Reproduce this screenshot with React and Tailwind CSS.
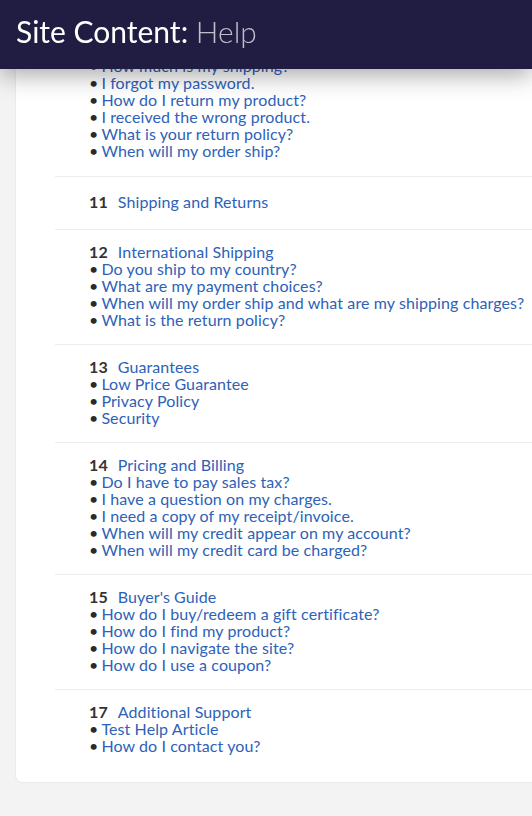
import React from "react";

// the page is scrolled: the top of the list sits under the fixed header
const sections = [
  {
    num: null,
    title: null,
    items: [
      "How much is my shipping?",
      "I forgot my password.",
      "How do I return my product?",
      "I received the wrong product.",
      "What is your return policy?",
      "When will my order ship?",
    ],
  },
  { num: 11, title: "Shipping and Returns", items: [] },
  {
    num: 12,
    title: "International Shipping",
    items: [
      "Do you ship to my country?",
      "What are my payment choices?",
      "When will my order ship and what are my shipping charges?",
      "What is the return policy?",
    ],
  },
  {
    num: 13,
    title: "Guarantees",
    items: ["Low Price Guarantee", "Privacy Policy", "Security"],
  },
  {
    num: 14,
    title: "Pricing and Billing",
    items: [
      "Do I have to pay sales tax?",
      "I have a question on my charges.",
      "I need a copy of my receipt/invoice.",
      "When will my credit appear on my account?",
      "When will my credit card be charged?",
    ],
  },
  {
    num: 15,
    title: "Buyer's Guide",
    items: [
      "How do I buy/redeem a gift certificate?",
      "How do I find my product?",
      "How do I navigate the site?",
      "How do I use a coupon?",
    ],
  },
  {
    num: 17,
    title: "Additional Support",
    items: ["Test Help Article", "How do I contact you?"],
  },
];

function Section({ section, first }) {
  const empty = section.items.length === 0;
  return (
    <div
      className={
        "pl-[34px] " +
        (first ? "pt-[8px] pb-[17px]" : "border-t border-[#ececec] ") +
        (first ? "" : empty ? "pt-[16px] pb-[19px]" : "pt-[13px] pb-[16px]")
      }
    >
      {section.num && (
        <div className="leading-[17px] whitespace-nowrap">
          <span className="font-bold text-[#333]">{section.num}</span>
          <a className="ml-[10px] text-[#2d62b8]">{section.title}</a>
        </div>
      )}
      {!empty && (
        <ul>
          {section.items.map((item) => (
            <li key={item} className="leading-[17px] whitespace-nowrap">
              <span className="text-[#2a2a2a] mr-[3px]">•</span>
              <a className="text-[#2d62b8]">{item}</a>
            </li>
          ))}
        </ul>
      )}
    </div>
  );
}

export default function App() {
  return (
    <div className="min-h-screen bg-[#f3f3f3] overflow-hidden font-['Lato',sans-serif] text-[16px] tracking-[0.1px]">
      {/* fixed page header over the scrolled content */}
      <header className="fixed top-0 inset-x-0 z-10 h-[69px] bg-[#211d42] flex items-center pl-4 pb-[8px] shadow-[0_6px_24px_rgba(0,0,0,0.35)]">
        <h1 className="text-[30px] leading-none text-white tracking-normal">
          Site Content: <span className="font-light text-[#bfbecb]">Help</span>
        </h1>
      </header>

      <div className="pl-4 pt-[49px] pb-[34px]">
        <div className="w-[560px] bg-white rounded-md shadow-[0_0_2px_rgba(0,0,0,0.12)] pl-[39px] pb-[12px]">
          {sections.map((s, i) => (
            <Section key={i} section={s} first={i === 0} />
          ))}
        </div>
      </div>
    </div>
  );
}
